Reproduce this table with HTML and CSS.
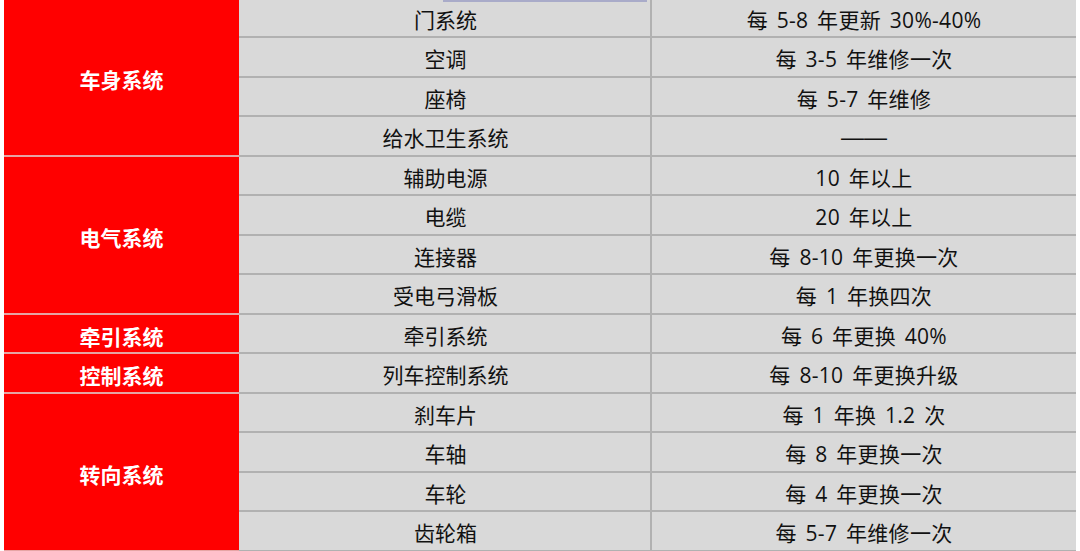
FILE: index.html
```html
<!DOCTYPE html>
<html lang="zh-CN">
<head>
<meta charset="utf-8">
<title>系统维修周期</title>
<link rel="stylesheet" href="styles.css">
</head>
<body>
<div class="page">
  <div class="topbar"></div>
  <div class="table">
    <div class="sys span4">车身系统</div>
    <div class="part">门系统</div><div class="val">每 5-8 年更新 30%-40%</div>
    <div class="part">空调</div><div class="val">每 3-5 年维修一次</div>
    <div class="part">座椅</div><div class="val">每 5-7 年维修</div>
    <div class="part">给水卫生系统</div><div class="val"><span class="dash">——</span></div>

    <div class="sys span4">电气系统</div>
    <div class="part">辅助电源</div><div class="val">10 年以上</div>
    <div class="part">电缆</div><div class="val">20 年以上</div>
    <div class="part">连接器</div><div class="val">每 8-10 年更换一次</div>
    <div class="part">受电弓滑板</div><div class="val">每 1 年换四次</div>

    <div class="sys">牵引系统</div>
    <div class="part">牵引系统</div><div class="val">每 6 年更换 40%</div>

    <div class="sys">控制系统</div>
    <div class="part">列车控制系统</div><div class="val">每 8-10 年更换升级</div>

    <div class="sys span4">转向系统</div>
    <div class="part">刹车片</div><div class="val">每 1 年换 1.2 次</div>
    <div class="part">车轴</div><div class="val">每 8 年更换一次</div>
    <div class="part">车轮</div><div class="val">每 4 年更换一次</div>
    <div class="part">齿轮箱</div><div class="val">每 5-7 年维修一次</div>
  </div>
</div>
</body>
</html>
```
FILE: styles.css
```css
html, body {
  margin: 0;
  padding: 0;
  background: #ffffff;
  overflow: hidden;
}

.page {
  position: relative;
  width: 1080px;
  height: 551px;
  overflow: hidden;
}

.topbar {
  position: absolute;
  left: 443px;
  top: 0;
  width: 204px;
  height: 2px;
  background: #a9abc9;
  z-index: 2;
}

.table {
  margin: -1.5px 0 0 4px;
  width: 1072px;
  display: grid;
  grid-template-columns: 235px 411px 426px;
  grid-auto-rows: 39.5px;
  font-family: "Open Sans", "Noto Sans CJK SC", sans-serif;
  font-size: 21px;
}

.table > div {
  box-sizing: border-box;
  display: flex;
  align-items: center;
  justify-content: center;
  border-bottom: 2px solid #b1b1b1;
  white-space: pre;
  padding-top: 3px;
}

.sys {
  grid-column: 1;
  background: #ff0000;
  color: #ffffff;
  font-weight: 700;
  border-bottom-color: #e6a5a5 !important;
  padding-top: 5px !important;
}

.span4 {
  grid-row: span 4;
}

.part {
  grid-column: 2;
  background: #d9d9d9;
  color: #111111;
  padding-left: 2px;
}

.val {
  grid-column: 3;
  background: #d9d9d9;
  color: #111111;
  border-left: 2px solid #b1b1b1;
  word-spacing: 3px;
  letter-spacing: 0.3px;
}

.dash {
  font-family: "Liberation Sans", sans-serif;
  font-size: 23px;
  color: #111111;
  word-spacing: 0;
  letter-spacing: 0;
}
```
